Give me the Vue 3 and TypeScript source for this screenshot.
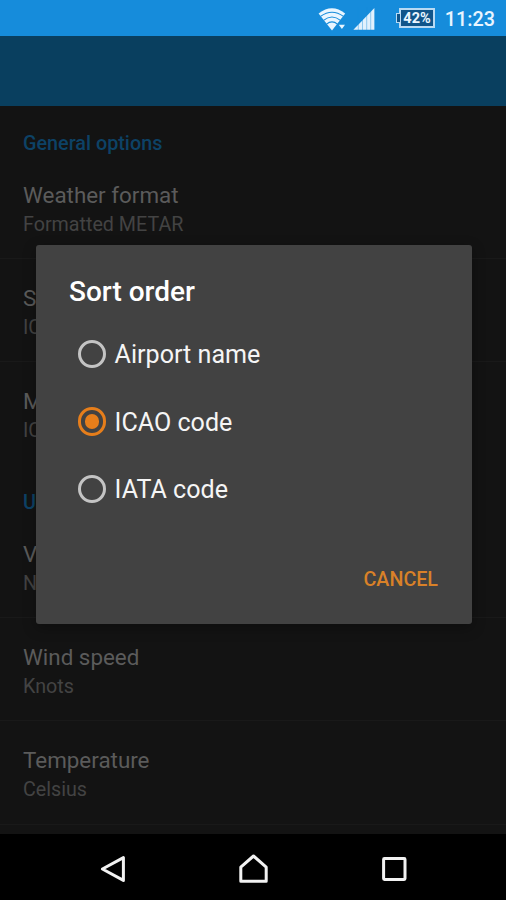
<script setup lang="ts">
import { ref } from 'vue'

interface Preference {
  title: string
  summary: string
}

interface Section {
  name: string
  items: Preference[]
}

const sections: Section[] = [
  {
    name: 'General options',
    items: [
      { title: 'Weather format', summary: 'Formatted METAR' },
      { title: 'S', summary: 'IC' },
      { title: 'M', summary: 'IC' },
    ],
  },
  {
    name: 'U',
    items: [
      { title: 'V', summary: 'N' },
      { title: 'Wind speed', summary: 'Knots' },
      { title: 'Temperature', summary: 'Celsius' },
    ],
  },
]

const options: string[] = ['Airport name', 'ICAO code', 'IATA code']
const selected = ref('ICAO code')
</script>

<template>
  <div class="screen">
    <header class="status">
      <svg class="wifi" width="28" height="24" viewBox="0 0 28 24">
        <path d="M.6 6.4Q14 -4 27.2 6.4L14 23.4Z" fill="#e9f5ff" />
        <g fill="none" stroke="#168cdb" stroke-width="1.1">
          <path d="M2.5 9.4Q14 1 25.5 9.4" />
          <path d="M5.5 13.4Q14 6.6 22.5 13.4" />
          <path d="M8.5 17.2Q14 12.6 19.5 17.2" />
        </g>
        <path d="M20 15.8h8V24h-8z" fill="#168cdb" />
        <path d="M20.8 17.8h6.2L23.9 22z" fill="#e9f5ff" />
      </svg>
      <svg class="signal" width="23" height="23" viewBox="0 0 23 23">
        <path d="M.4 22.8L21.4 1V22.8Z" fill="#e2f1fd" />
        <path d="M5.3 0V23M9.5 0V23M13.7 0V23M17.7 0V23" stroke="#168cdb" stroke-width="1" opacity=".4" />
      </svg>
      <div class="battery"><span>42%</span></div>
      <time class="clock">11:23</time>
    </header>
    <div class="toolbar"></div>
    <main class="list">
      <section v-for="section in sections" :key="section.name">
        <h2>{{ section.name }}</h2>
        <div v-for="item in section.items" :key="item.title" class="row">
          <div class="row-title">{{ item.title }}</div>
          <div class="row-summary">{{ item.summary }}</div>
        </div>
      </section>
    </main>
    <nav class="nav">
      <svg width="28" height="30" viewBox="0 0 28 30">
        <path d="M24.4 3.6V26.4L3.4 15Z" />
      </svg>
      <svg width="32" height="32" viewBox="0 0 32 32">
        <path d="M15.5 3L28.2 14.2V28.3H2.8V14.2Z" />
      </svg>
      <svg width="28" height="28" viewBox="0 0 28 28">
        <rect x="3.6" y="3.6" width="21.4" height="20.8" rx=".8" />
      </svg>
    </nav>

    <div class="dialog" role="dialog">
      <h1>Sort order</h1>
      <div class="options">
        <label v-for="option in options" :key="option" class="option" @click="selected = option">
          <span class="radio" :class="{ checked: option === selected }"></span>
          <span class="option-label">{{ option }}</span>
        </label>
      </div>
      <button class="cancel" type="button">CANCEL</button>
    </div>
  </div>
</template>

<style>
body {
  margin: 0;
  background: #000;
}
</style>

<style scoped>
.screen {
  position: relative;
  display: flex;
  flex-direction: column;
  width: 506px;
  height: 900px;
  overflow: hidden;
  background: #131313;
  font-family: Roboto, sans-serif;
}

.status {
  display: flex;
  flex: none;
  box-sizing: border-box;
  height: 36px;
  padding: 7px 11px 0 318px;
  background: #168cdb;
  color: #e9f5ff;
}

.wifi {
  flex: none;
}

.signal {
  flex: none;
  margin-left: 7px;
}

.battery {
  position: relative;
  flex: none;
  box-sizing: border-box;
  width: 36px;
  height: 20px;
  margin: 1px 0 0 23px;
  border: 2px solid #b9daf3;
  background: #10558a;
  font-size: 14.5px;
  font-weight: 700;
  line-height: 17px;
  text-align: center;
}

.battery::before {
  position: absolute;
  top: 3px;
  left: -5px;
  width: 3px;
  height: 8px;
  border: 1px solid #b9daf3;
  border-right: 0;
  background: #10558a;
  content: '';
}

.clock {
  margin-left: auto;
  font-size: 19.8px;
  font-weight: 500;
  line-height: 25px;
}

.toolbar {
  flex: none;
  height: 70px;
  background: #093f5f;
}

.list {
  flex: none;
  height: 728px;
  overflow: hidden;
}

h2 {
  box-sizing: border-box;
  height: 49.5px;
  margin: 0;
  padding: 26px 23px 0;
  color: #0d4266;
  font-size: 19.8px;
  font-weight: 500;
  line-height: 24px;
}

.row {
  box-sizing: border-box;
  height: 103.3px;
  padding: 25px 23px 0;
  border-bottom: 1px solid #191919;
}

section:not(:last-child) .row:last-child {
  border-bottom-color: transparent;
}

.row-title {
  color: #5b5b5b;
  font-size: 22.4px;
  line-height: 28px;
}

.row-summary {
  color: #434343;
  font-size: 19.7px;
  line-height: 31px;
}

.nav {
  display: flex;
  flex: 1;
  align-items: center;
  justify-content: space-between;
  padding: 3px 98px 0 99px;
  background: #000;
}

.nav svg {
  fill: none;
  stroke: #f2f2f2;
  stroke-linejoin: round;
  stroke-width: 3;
}

.dialog {
  position: absolute;
  top: 245px;
  left: 36px;
  display: flex;
  flex-direction: column;
  box-sizing: border-box;
  width: 435.5px;
  height: 379px;
  padding: 28px 33.5px 26px 33px;
  border-radius: 3px;
  background: #424242;
  box-shadow: 0 4px 14px rgb(0 0 0 / 30%);
  color: #fff;
}

h1 {
  margin: 0;
  font-size: 28px;
  font-weight: 500;
  line-height: 37px;
}

.options {
  display: flex;
  flex-direction: column;
  margin: 10px 0 0 8.5px;
}

.option {
  display: flex;
  align-items: center;
  gap: 8.6px;
  height: 67.5px;
  color: #f5f5f5;
  font-size: 25.1px;
}

.option-label {
  padding-top: 2px;
}

.radio {
  display: flex;
  align-items: center;
  justify-content: center;
  box-sizing: border-box;
  width: 28.5px;
  height: 28.5px;
  border: 3px solid #c4c4c4;
  border-radius: 50%;
}

.radio.checked {
  border-color: #e67e1b;
}

.radio.checked::after {
  width: 14.5px;
  height: 14.5px;
  border-radius: 50%;
  background: #e67e1b;
  content: '';
}

.cancel {
  align-self: flex-end;
  margin: auto 0 0;
  padding: 0;
  border: 0;
  background: none;
  color: #d98128;
  font-family: inherit;
  font-size: 19.7px;
  font-weight: 500;
  line-height: 36px;
}
</style>
